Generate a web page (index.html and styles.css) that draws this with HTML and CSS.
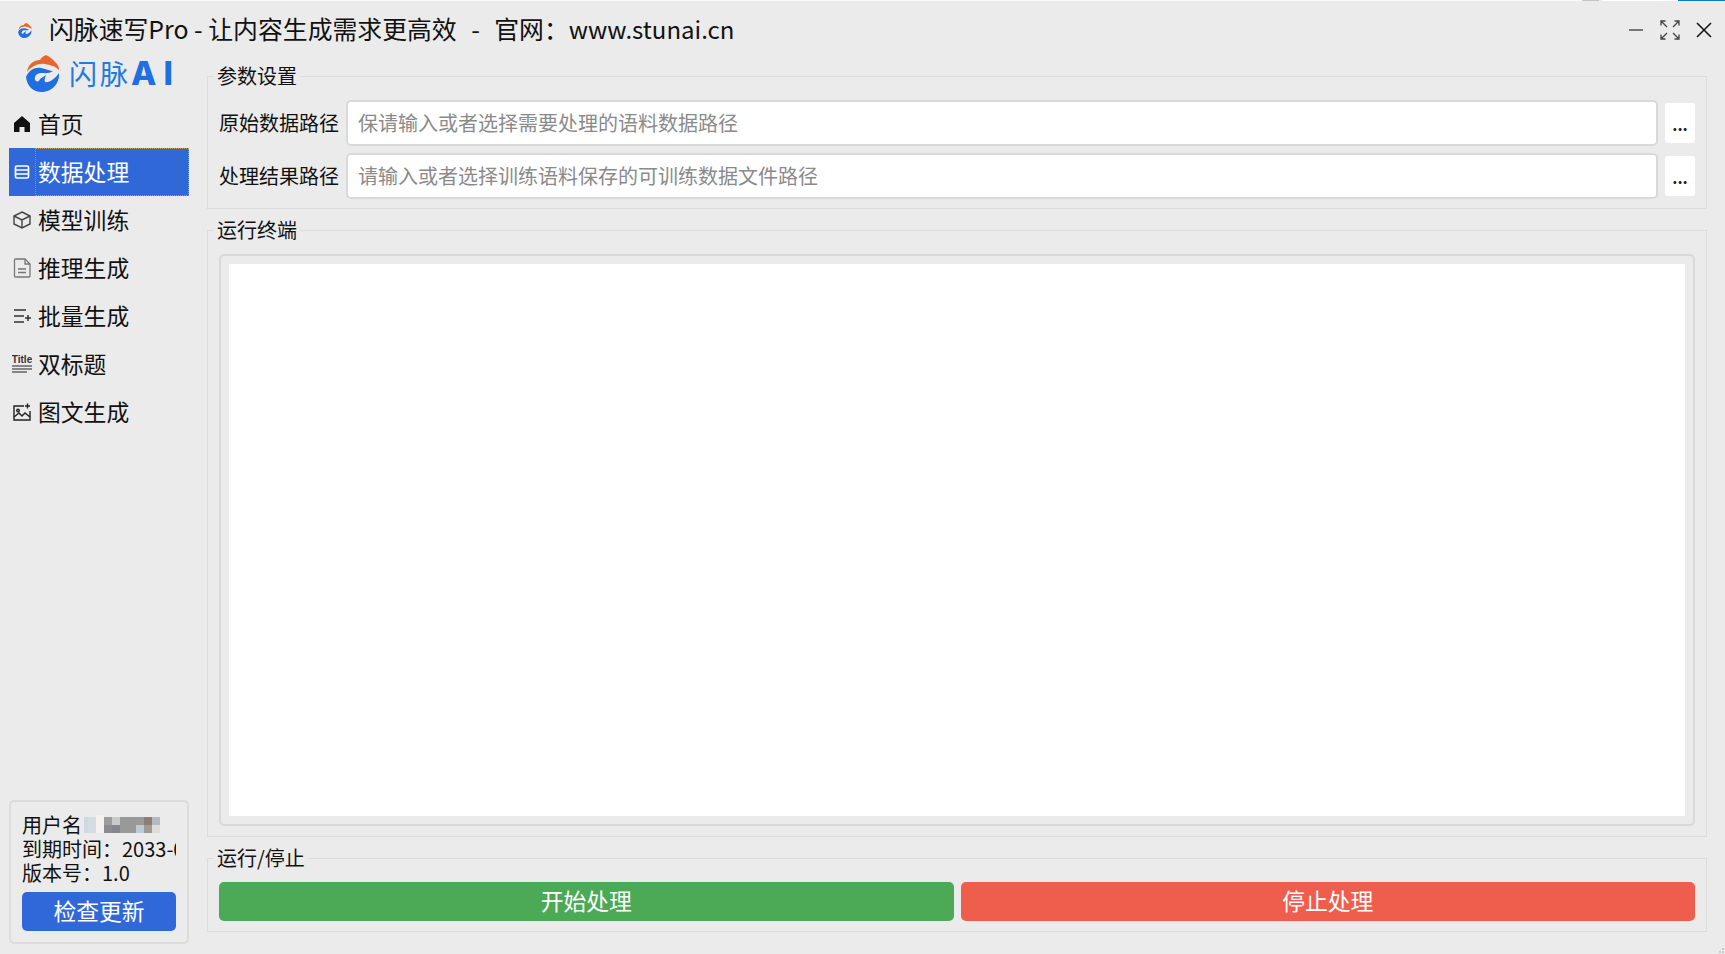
FILE: index.html
```html
<!DOCTYPE html>
<html lang="zh-CN">
<head>
<meta charset="utf-8">
<title>闪脉速写Pro</title>
<link rel="stylesheet" href="styles.css">
</head>
<body>
<svg class="defs" width="0" height="0" aria-hidden="true">
  <symbol id="swirl" viewBox="0 0 34 37">
    <path fill="#e9662f" d="M1 17C2 9 8 5 14 5C15 3 17 1 20 0C24 2 27 4 29 7C32 9 33 12 33 15C29 11 24 10 19 9C12 8 6 11 1 17Z"/>
    <path fill="#1f6fe0" d="M0 22C3 15 9 12 15 13C21 14 24 16 27 16C23 19 19 18 15 18C10 18 8 22 9 25C12 28 13 26 14 24L20 20C19 23 18 25 19 27C23 28 29 24 33 18C34 28 26 37 16 37C7 37 1 31 0 22Z"/>
  </symbol>
</svg>
<div class="window">
  <div class="strip">
    <span class="seg seg-fill"></span>
    <span class="seg seg-gray"></span>
    <span class="seg seg-white"></span>
    <span class="seg seg-blue"></span>
  </div>
  <header class="titlebar">
    <svg class="app-icon"><use href="#swirl"/></svg>
    <span class="app-title">闪脉速写Pro - 让内容生成需求更高效  <span class="title-sep">-</span>  官网：<span class="title-url">www.stunai.cn</span></span>
    <div class="controls">
      <svg class="ctl ctl-min" viewBox="0 0 14 2"><path d="M0 1H14" stroke="#777" stroke-width="2"/></svg>
      <svg class="ctl ctl-max" viewBox="0 0 20 20" fill="none" stroke="#444" stroke-width="1.3">
        <path d="M7 7L1 1M1 5.500V1H5.500M13 7L19 1M14.500 1H19V5.500M7 13L1 19M1 14.500V19H5.500M13 13L19 19M14.500 19H19V14.500"/>
      </svg>
      <svg class="ctl ctl-close" viewBox="0 0 16 16"><path d="M1 1L15 15M15 1L1 15" stroke="#111" stroke-width="1.500"/></svg>
    </div>
  </header>
  <div class="body">
    <aside class="sidebar">
      <div class="logo">
        <svg class="logo-mark"><use href="#swirl"/></svg>
        <span class="logo-cn">闪脉</span><span class="logo-ai">AI</span>
      </div>
      <nav class="nav">
        <div class="item">
          <svg class="ico" viewBox="0 0 18 18"><path fill="#111" d="M9 1L17 8V17H11.500V12H6.500V17H1V8Z"/></svg>
          <span class="item-label">首页</span>
        </div>
        <div class="item item-active">
          <svg class="ico" viewBox="0 0 18 18" fill="none" stroke="#fff" stroke-width="1.700"><rect x="2.500" y="3" width="13" height="12" rx="1.500"/><path d="M3 7H15M3 11H15"/></svg>
          <span class="item-label">数据处理</span>
        </div>
        <div class="item">
          <svg class="ico" viewBox="0 0 18 18" fill="none" stroke="#444" stroke-width="1.400"><path d="M9 1L17 5V13L9 17L1 13V5Z"/><path d="M1 5L9 9L17 5M9 9V17"/></svg>
          <span class="item-label">模型训练</span>
        </div>
        <div class="item">
          <svg class="ico ico-doc" viewBox="0 0 18 20" fill="none" stroke="#777" stroke-width="1.300"><path d="M2.500 1H12L17 6V18C17 18.600 16.600 19 16 19H2.500C1.900 19 1.500 18.600 1.500 18V2C1.500 1.400 1.900 1 2.500 1Z"/><path d="M12 1V6H17M5 11H13M5 14.500H13"/></svg>
          <span class="item-label">推理生成</span>
        </div>
        <div class="item">
          <svg class="ico" viewBox="0 0 18 18" fill="none" stroke="#333" stroke-width="1.500"><path d="M1 3H13M1 9H11M1 15H11M12 11H18M15 8V14"/></svg>
          <span class="item-label">批量生成</span>
        </div>
        <div class="item">
          <svg class="ico ico-title" viewBox="0 0 20 20"><text class="title-glyph" x="10" y="9" text-anchor="middle">Title</text><path d="M0 12H20M0 15H20M0 18H15" stroke="#222" stroke-width="1.200"/></svg>
          <span class="item-label">双标题</span>
        </div>
        <div class="item">
          <svg class="ico" viewBox="0 0 18 18" fill="none" stroke="#222" stroke-width="1.400"><path d="M11 3H1V17H17V8"/><path d="M14.500 0.500V5.500M12 3H17"/><circle cx="5" cy="7.500" r="1.300"/><path d="M1 14L6 10L9 13L12 10L17 14"/></svg>
          <span class="item-label">图文生成</span>
        </div>
      </nav>
      <div class="info">
        <div class="info-line">
          <span>用户名</span>
          <svg class="mosaic" viewBox="0 0 80 20" shape-rendering="crispEdges">
            <rect x="0" y="2" width="4" height="16" fill="#cfd9e3"/>
            <rect x="4" y="2" width="8" height="16" fill="#d5dde4"/>
            <rect x="12" y="0" width="8" height="18" fill="#f3f2f0"/>
            <rect x="20" y="2" width="8" height="8" fill="#9c9c9c"/>
            <rect x="20" y="10" width="8" height="8" fill="#8c8c90"/>
            <rect x="28" y="2" width="8" height="8" fill="#c9c9c9"/>
            <rect x="28" y="10" width="8" height="8" fill="#84858c"/>
            <rect x="36" y="2" width="16" height="16" fill="#999"/>
            <rect x="52" y="2" width="8" height="8" fill="#9a9a9a"/>
            <rect x="52" y="10" width="8" height="8" fill="#bccbd8"/>
            <rect x="60" y="2" width="8" height="8" fill="#877f76"/>
            <rect x="60" y="10" width="8" height="8" fill="#a09a93"/>
            <rect x="68" y="2" width="8" height="8" fill="#b4bbc0"/>
            <rect x="68" y="10" width="8" height="8" fill="#dddcdb"/>
          </svg>
        </div>
        <div class="info-line info-clip">到期时间：2033-01-01</div>
        <div class="info-line">版本号：1.0</div>
        <button class="btn btn-blue btn-update">检查更新</button>
      </div>
    </aside>
    <main class="main">
      <fieldset class="group">
        <legend class="group-title">参数设置</legend>
        <div class="rows">
          <div class="row">
            <label class="row-label">原始数据路径</label>
            <input class="path" placeholder="保请输入或者选择需要处理的语料数据路径">
            <button class="pick">...</button>
          </div>
          <div class="row">
            <label class="row-label">处理结果路径</label>
            <input class="path" placeholder="请输入或者选择训练语料保存的可训练数据文件路径">
            <button class="pick">...</button>
          </div>
        </div>
      </fieldset>
      <fieldset class="group group-term">
        <legend class="group-title">运行终端</legend>
        <div class="terminal"><div class="terminal-screen"></div></div>
      </fieldset>
      <fieldset class="group group-run">
        <legend class="group-title">运行/停止</legend>
        <div class="actions">
          <button class="btn btn-green">开始处理</button>
          <button class="btn btn-red">停止处理</button>
        </div>
      </fieldset>
    </main>
  </div>
  <svg class="grip" viewBox="0 0 6 6" shape-rendering="crispEdges"><rect x="3" y="0" width="2" height="2" fill="#c8c8c8"/><rect x="0" y="3" width="2" height="2" fill="#c8c8c8"/><rect x="3" y="3" width="2" height="2" fill="#c8c8c8"/></svg>
</div>
</body>
</html>
```

FILE: styles.css
```css
* { box-sizing: border-box; }
html, body { margin: 0; padding: 0; height: 100%; overflow: hidden; }
body {
  background: #ebebeb;
  color: #111;
  font-family: "Noto Sans CJK SC", "Noto Sans", sans-serif;
}
.defs { position: absolute; }
.window { position: relative; display: flex; flex-direction: column; width: 1725px; height: 954px; }

.strip { display: flex; height: 1px; flex: none; }
.seg { display: block; height: 100%; }
.seg-fill { flex: 1; background: #fafafa; }
.seg-gray { width: 17px; background: #c4c4c4; }
.seg-white { width: 76px; margin-left: 3px; background: #fff; }
.seg-blue { width: 47px; background: #0a7fc6; }

.titlebar { display: flex; align-items: center; flex: none; height: 58px; margin-bottom: -11px; padding: 0 13px 0 18px; }
.app-icon { width: 14px; height: 15px; flex: none; }
.app-title { margin-left: 17px; padding-bottom: 3px; font-size: 24.850px; line-height: 32px; white-space: pre; }
.title-sep { margin: 0 3.300px; }
.title-url { font-size: 24px; }
.controls { display: flex; align-items: center; margin-left: auto; }
.ctl { display: block; flex: none; }
.ctl-min { width: 14px; height: 2px; }
.ctl-max { width: 20px; height: 20px; margin-left: 17px; }
.ctl-close { width: 16px; height: 16px; margin-left: 16px; }

.body { display: flex; flex: 1; min-height: 0; }

.sidebar { display: flex; flex-direction: column; flex: none; width: 207px; padding: 7px 18px 10px 9px; }
.logo { display: flex; align-items: center; height: 37px; margin-bottom: 8px; padding-left: 17px; color: #1f7be0; }
.logo-mark { width: 34px; height: 37px; flex: none; }
.logo-cn { margin-left: 9px; font-size: 28px; line-height: 37px; letter-spacing: 3px; }
.logo-ai { font-family: "Inter", sans-serif; font-size: 33px; font-weight: 800; line-height: 37px; letter-spacing: 7px; color: #1f6fe0; }

.nav { display: flex; flex-direction: column; }
.item { display: flex; align-items: center; height: 48px; padding-left: 4px; font-size: 22.800px; }
.ico { display: block; flex: none; width: 18px; height: 18px; }
.ico-doc { height: 20px; }
.ico-title { width: 20px; height: 20px; margin-left: -1px; margin-right: -1px; }
.title-glyph { font-family: "Liberation Sans", sans-serif; font-size: 10px; font-weight: 700; fill: #333; }
.item-label { display: flex; align-items: center; flex: 1; height: 100%; margin-left: 4px; padding: 0 0 2px 3px; }
.item-active { background: #3068da; color: #fff; }
.item-active .item-label { border: 1px dotted #b89a55; border-left-color: #a88f62; padding-left: 2px; }

.info { margin-top: auto; padding: 11px 11px 11px; height: 144px; border: 2px solid #dcdcdc; border-radius: 5px; }
.info-line { display: flex; align-items: center; height: 24px; font-size: 20px; line-height: 24px; white-space: pre; }
.info-clip { overflow-x: clip; }
.mosaic { display: block; flex: none; width: 80px; height: 20px; margin-left: 2px; }

.btn { display: block; border: 0; border-radius: 5px; color: #fff; font-family: inherit; font-size: 22.800px; line-height: 30px; padding: 0 0 2px; }
.btn-blue { background: #3068da; }
.btn-green { flex: 1; background: #4caa57; }
.btn-red { flex: 1; background: #ef5e4c; }
.btn-update { width: 100%; height: 39px; margin-top: 7px; }

.main { display: flex; flex-direction: column; flex: none; width: 1500px; padding: 14px 0 22px; }
.group { min-width: 0; margin: 0; padding: 0 11px; border: 1px solid #dcdcdc; }
.group-title { margin-left: -5px; padding: 0 3px; font-size: 20px; line-height: 28px; }
.rows { display: flex; flex-direction: column; gap: 7px; padding: 10px 0 9px; }
.row { display: flex; align-items: center; height: 46px; }
.row-label { flex: none; width: 127px; font-size: 20px; line-height: 28px; padding-bottom: 1px; }
.path {
  flex: 1; min-width: 0; height: 46px; padding: 0 10px 2px;
  border: 2px solid #d9d9d9; border-radius: 5px; background: #fff;
  color: #111; font-family: inherit; font-size: 20px; outline: 0;
}
.path::placeholder { color: #8a8a8a; opacity: 1; }
.pick {
  flex: none; width: 30px; height: 40px; margin-left: 7px; padding: 2px 0 0;
  border: 0; border-radius: 2px; background: #fff; color: #222;
  font-family: inherit; font-size: 16px; font-weight: 700; line-height: 20px;
}

.group-term { display: flex; flex-direction: column; flex: 1; min-height: 0; margin-top: 7px; padding-top: 10px; padding-bottom: 10px; }
.terminal { flex: 1; min-height: 0; height: 100%; padding: 8px; border: 2px solid #d9d9d9; border-radius: 5px; }
.terminal-screen { height: 100%; background: #fff; }

.group-run { flex: none; margin-top: 7px; padding-top: 10px; padding-bottom: 10px; }
.actions { display: flex; gap: 7px; height: 39px; }

.grip { position: absolute; right: 0; bottom: 0; width: 6px; height: 6px; }
```
